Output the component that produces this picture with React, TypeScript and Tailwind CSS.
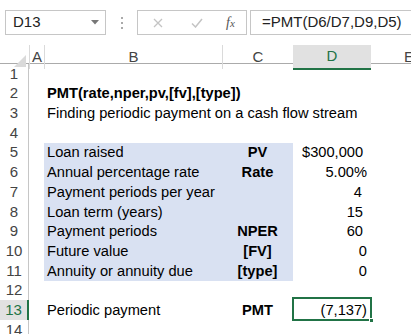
import React from "react";

type Row = {
  n: number;
  b?: string;
  c?: string;
  d?: string;
  dPad?: string;
  bold?: boolean;
  fill?: boolean;
};

const rows: Row[] = [
  { n: 1 },
  { n: 2, b: "PMT(rate,nper,pv,[fv],[type])", bold: true },
  { n: 3, b: "Finding periodic payment on a cash flow stream" },
  { n: 4 },
  { n: 5, b: "Loan raised", c: "PV", d: "$300,000", fill: true, dPad: "pr-[9px]" },
  { n: 6, b: "Annual percentage rate", c: "Rate", d: "5.00%", fill: true, dPad: "pr-[4px]" },
  { n: 7, b: "Payment periods per year", d: "4", fill: true, dPad: "pr-[9px]" },
  { n: 8, b: "Loan term (years)", d: "15", fill: true, dPad: "pr-[8px]" },
  { n: 9, b: "Payment periods", c: "NPER", d: "60", fill: true, dPad: "pr-[8px]" },
  { n: 10, b: "Future value", c: "[FV]", d: "0", fill: true, dPad: "pr-[4px]" },
  { n: 11, b: "Annuity or annuity due", c: "[type]", d: "0", fill: true, dPad: "pr-[4px]" },
  { n: 12 },
  { n: 13, b: "Periodic payment", c: "PMT", d: "(7,137)", dPad: "pr-[4px]" },
  { n: 14 },
];

const grid = "grid grid-cols-[29px_15px_178px_71px_78px_1fr]";

const FormulaBar = () => (
  <div className="flex items-center h-[45px] pt-[10px] pb-[10px]">
    <div className="ml-[5px] w-[101px] h-[25px] border border-[#c6c6c6] flex items-center justify-between pl-[7px] pr-[6px] text-[15px] text-[#222]">
      <span>D13</span>
      <svg width="8" height="5" viewBox="0 0 8 5">
        <path d="M0 0h8L4 4.5z" fill="#777" />
      </svg>
    </div>
    <div className="w-[31px] flex flex-col items-center gap-[3px]">
      <span className="w-[2px] h-[2px] bg-[#aaa]" />
      <span className="w-[2px] h-[2px] bg-[#aaa]" />
      <span className="w-[2px] h-[2px] bg-[#aaa]" />
    </div>
    <div className="w-[110px] h-[25px] border border-[#c6c6c6] flex items-center">
      <svg className="ml-[15px]" width="10" height="10" viewBox="0 0 10 10">
        <path d="M1 1l8 8M9 1l-8 8" stroke="#c4c4c4" strokeWidth="1.3" />
      </svg>
      <svg className="ml-[28px]" width="12" height="10" viewBox="0 0 12 10">
        <path d="M1 5.5l3.5 3.5L11 1" stroke="#c4c4c4" strokeWidth="1.5" fill="none" />
      </svg>
      <span className="ml-[23px] text-[14px] italic text-[#555] font-['Liberation_Serif',serif]">
        f<span className="text-[11px]">x</span>
      </span>
    </div>
    <div className="ml-[3px] flex-1 h-[25px] border border-r-0 border-[#c6c6c6] flex items-center pl-[11px] text-[15px] text-[#222]">
      =PMT(D6/D7,D9,D5)
    </div>
  </div>
);

const HeaderRow = () => (
  <div className={`${grid} h-[19px] border-b border-[#ababab] text-[15px] text-[#444]`}>
    <div className="relative">
      <svg className="absolute right-[3px] bottom-[2px]" width="12" height="12" viewBox="0 0 12 12">
        <path d="M12 0v12H0z" fill="#dadada" />
      </svg>
    </div>
    <div className="flex items-center justify-center border-l border-[#dadada]">A</div>
    <div className="flex items-center justify-center border-l border-[#dadada]">B</div>
    <div className="flex items-center justify-center border-l border-[#dadada]">C</div>
    <div className="flex items-center justify-center bg-[#e1e1e1] text-[#217346] border-b-2 border-[#217346] -mb-[1px]">
      D
    </div>
    <div className="flex items-center pl-[33px]">E</div>
  </div>
);

const SheetRow = ({ r }: { r: Row }) => {
  const active = r.n === 13;
  const fill = r.fill ? "bg-[#d9e1f2]" : "";
  return (
    <div className={`${grid} h-[19.7px] text-[14.67px] text-black leading-[18px]`}>
      <div
        className={`flex items-end justify-center pb-[1px] text-[15px] text-[#444] border-r ${
          active ? "bg-[#e1e1e1] text-[#217346] border-r-2 border-[#217346]" : "border-[#c6c6c6]"
        }`}
      >
        {r.n}
      </div>
      <div />
      <div className={`flex items-end pl-[3px] pb-[1px] whitespace-nowrap ${fill} ${r.bold ? "font-bold" : ""}`}>
        {r.b}
      </div>
      <div className={`flex items-end justify-center pb-[1px] font-bold ${fill}`}>{r.c}</div>
      <div className={`relative flex items-end justify-end pb-[1px] ${r.dPad ?? ""}`}>
        {r.n === 5 ? (
          <span className="flex w-full justify-between pl-[9px]">
            <span>$</span>
            <span>300,000</span>
          </span>
        ) : (
          r.d
        )}
        {active && (
          <>
            <div className="absolute -left-[1px] -right-[1px] -top-[3px] -bottom-[1px] border-2 border-[#217346]" />
            <div className="absolute -right-[3px] -bottom-[3px] w-[5px] h-[5px] bg-[#217346] border border-white" />
          </>
        )}
      </div>
      <div />
    </div>
  );
};

export default function App() {
  return (
    <div className="w-[411px] h-[334px] overflow-hidden bg-white font-['Liberation_Sans',Arial,sans-serif]">
      <FormulaBar />
      <HeaderRow />
      <div>
        {rows.map((r) => (
          <SheetRow key={r.n} r={r} />
        ))}
      </div>
    </div>
  );
}
